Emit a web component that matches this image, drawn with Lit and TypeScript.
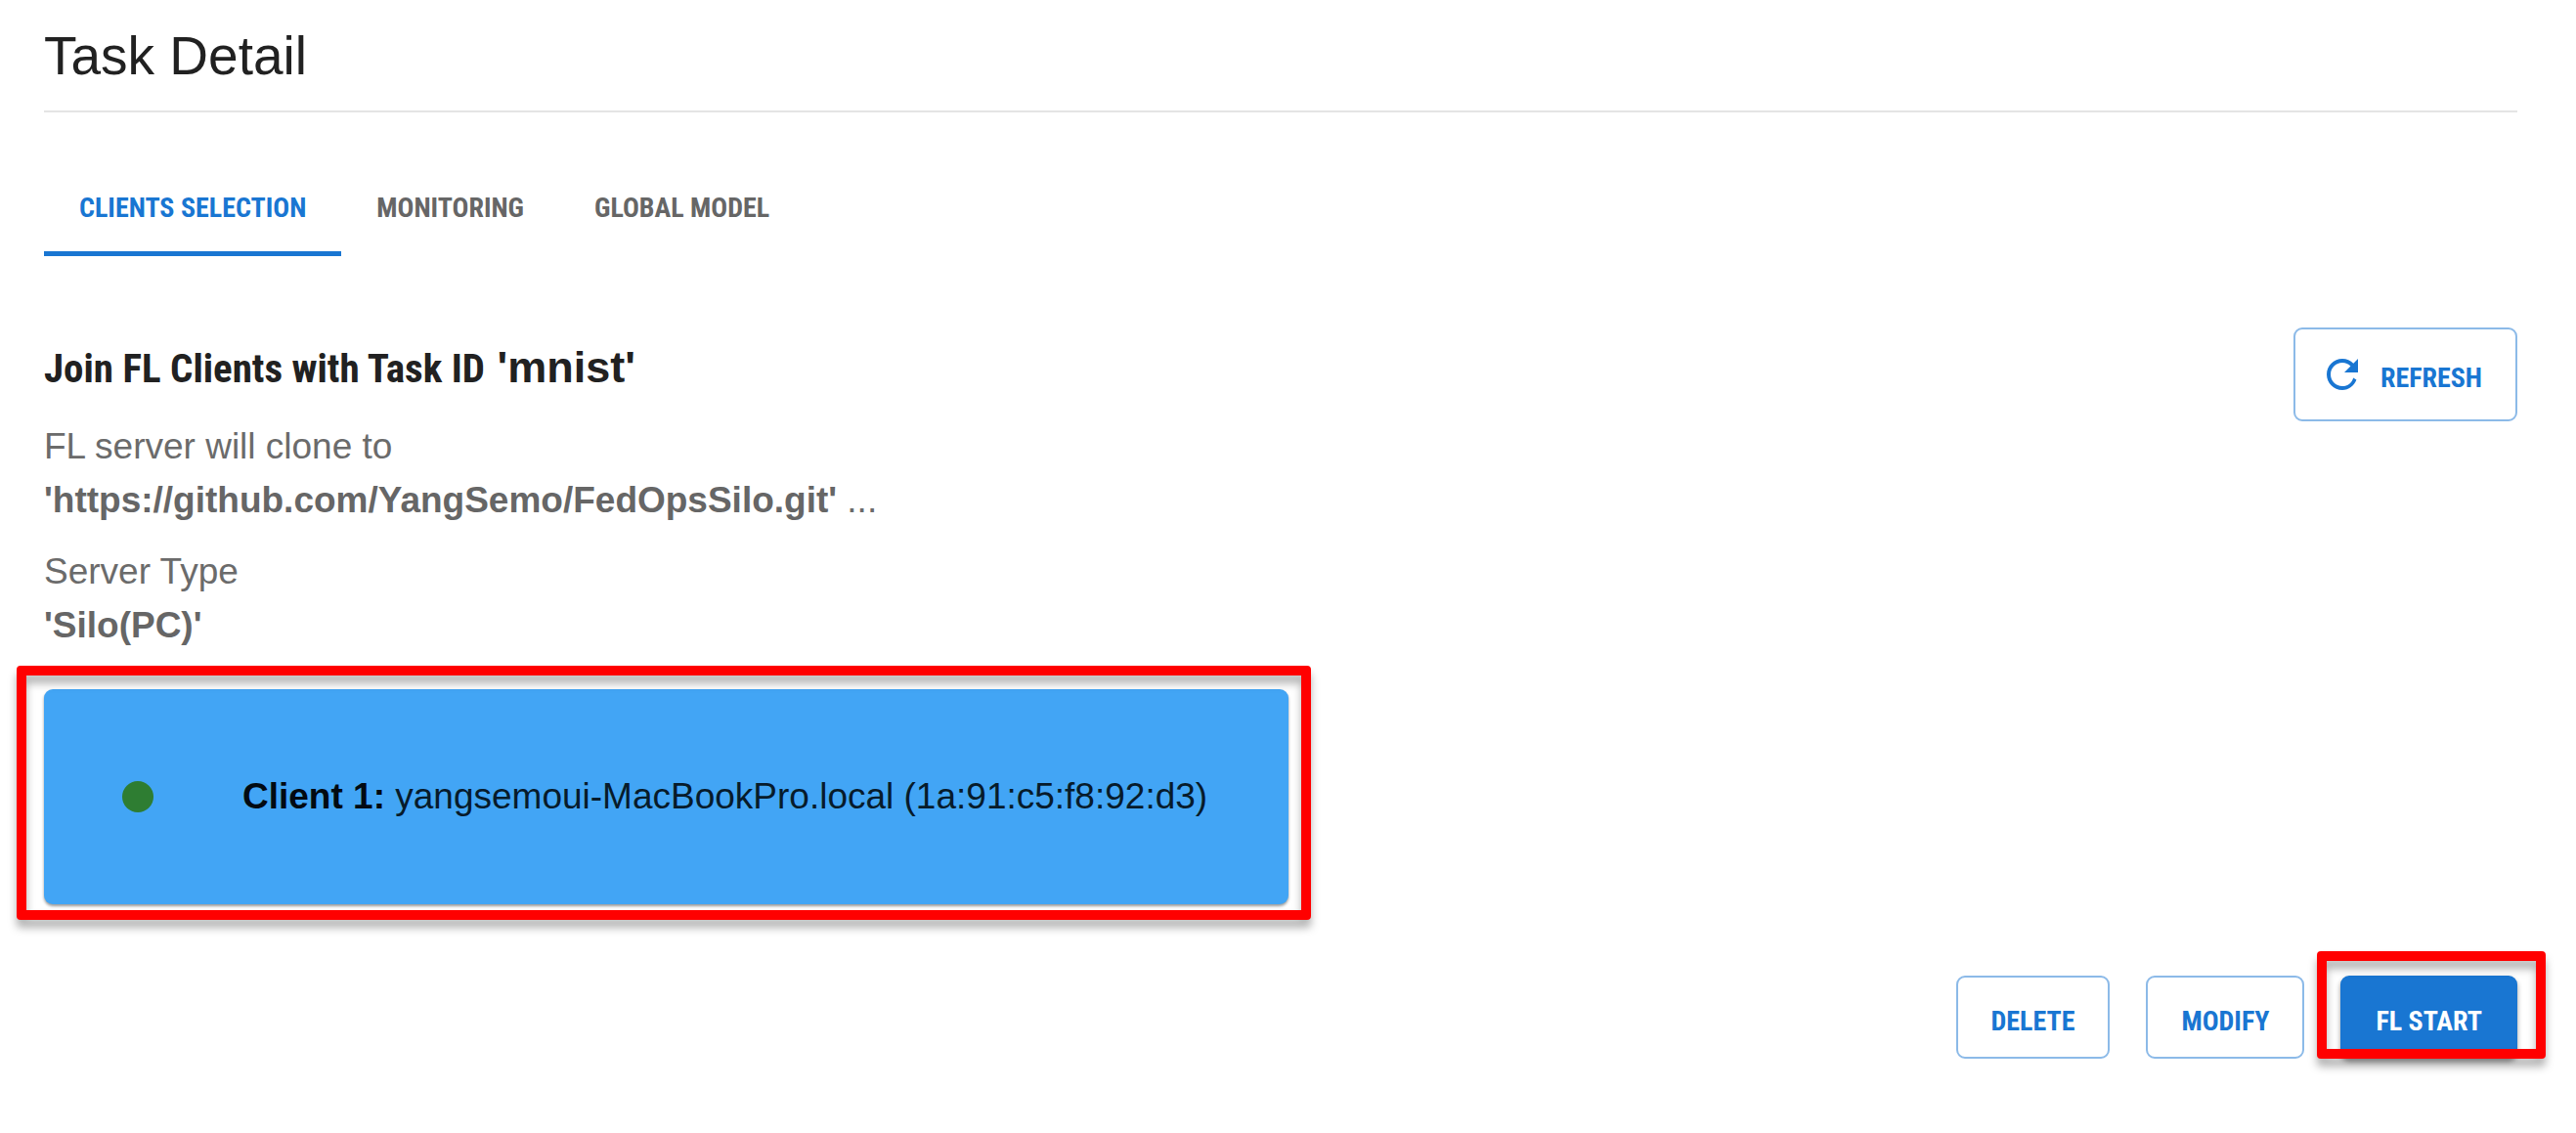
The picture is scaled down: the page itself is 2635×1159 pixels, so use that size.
import { LitElement, html, css } from "lit";
import { customElement, state } from "lit/decorators.js";

interface Client {
  label: string;
  host: string;
}

@customElement("app-root")
export class AppRoot extends LitElement {
  @state() private active = 0;

  private tabs = ["CLIENTS SELECTION", "MONITORING", "GLOBAL MODEL"];

  private clients: Client[] = [
    { label: "Client 1:", host: "yangsemoui-MacBookPro.local (1a:91:c5:f8:92:d3)" },
  ];

  static styles = css`
    :host {
      display: block;
      background: #fff;
      color: #212121;
      font-family: "Liberation Sans", Arial, sans-serif;
      font-size: 37px;
      line-height: 55px;
      --narrow: "Liberation Sans Narrow", "Roboto Condensed", "Open Sans Condensed",
        "DejaVu Sans Condensed", sans-serif;
      --primary: #1976d2;
    }
    * {
      box-sizing: border-box;
    }
    .page {
      display: flex;
      flex-direction: column;
      padding: 21px 60px 73px 45px;
    }
    .title {
      margin: 0;
      padding-bottom: 20px;
      border-bottom: 2px solid #e4e4e4;
      font-size: 55px;
      font-weight: 400;
      line-height: 72px;
    }
    .tabs {
      display: flex;
      margin-top: 37px;
    }
    .tab {
      padding: 41px 36px 24px;
      border: 0;
      border-bottom: 5px solid transparent;
      background: none;
      color: #666;
      font: 700 28px/40px var(--narrow);
      cursor: pointer;
    }
    .tab.active {
      color: var(--primary);
      border-color: var(--primary);
    }
    .panel {
      display: flex;
      justify-content: space-between;
      align-items: flex-start;
      margin-top: 73px;
    }
    .info {
      display: flex;
      flex-direction: column;
      gap: 18px;
      padding-top: 9px;
    }
    .heading {
      margin: 0 0 2px;
      font-size: 45px;
      line-height: 64px;
    }
    .heading .lead {
      font-family: var(--narrow);
      font-size: 41px;
    }
    .text {
      margin: 0;
      color: #6b6b6b;
    }
    .text b {
      color: #666;
    }
    .btn {
      display: flex;
      align-items: center;
      justify-content: center;
      padding: 25px 34px 16px;
      border: 2px solid #8cbae8;
      border-radius: 9px;
      background: #fff;
      color: var(--primary);
      font: 700 28px/40px var(--narrow);
      cursor: pointer;
    }
    .btn.refresh {
      gap: 15px;
      padding: 22px 34px 22px 24px;
    }
    .btn.refresh .label {
      padding-top: 8px;
    }
    .btn.refresh .icon {
      width: 48px;
      height: 48px;
      fill: currentColor;
    }
    .btn.start {
      border-color: var(--primary);
      background: var(--primary);
      color: #fff;
      box-shadow: 0 3px 5px rgba(0, 0, 0, 0.4);
    }
    .clients {
      display: grid;
      grid-template-columns: minmax(0, 1272fr) minmax(0, 1257fr);
      margin-top: 38px;
    }
    .marked {
      position: relative;
    }
    .frame {
      position: absolute;
      border: 10px solid #f00;
      border-radius: 4px;
      filter: drop-shadow(0 8px 4px rgba(0, 0, 0, 0.3));
      pointer-events: none;
    }
    .frame.client {
      inset: -24px -23px -16px -28px;
    }
    .frame.launch {
      inset: -25px -29px 0 -24px;
    }
    .card {
      display: flex;
      align-items: center;
      gap: 91px;
      padding: 82px 73px 83px 80px;
      border-radius: 9px;
      background: #42a5f5;
      color: #071b2b;
      box-shadow: 0 2px 3px rgba(0, 0, 0, 0.4);
      white-space: nowrap;
    }
    .card b {
      color: #020a12;
    }
    .dot {
      width: 32px;
      height: 32px;
      border-radius: 50%;
      background: #2e7d32;
    }
    .actions {
      display: flex;
      justify-content: flex-end;
      gap: 37px;
      margin-top: 73px;
    }
  `;

  render() {
    return html`
      <main class="page">
        <h1 class="title">Task Detail</h1>
        <div class="tabs" role="tablist">
          ${this.tabs.map(
            (tab, i) => html`<button
              class="tab ${i === this.active ? "active" : ""}"
              role="tab"
              aria-selected=${i === this.active}
              @click=${() => (this.active = i)}
            >${tab}</button>`
          )}
        </div>
        <section class="panel">
          <div class="info">
            <h2 class="heading"><span class="lead">Join FL Clients with Task ID</span> 'mnist'</h2>
            <p class="text">
              FL server will clone to<br /><b>'https://github.com/YangSemo/FedOpsSilo.git'</b> ...
            </p>
            <p class="text">Server Type<br /><b>'Silo(PC)'</b></p>
          </div>
          <button class="btn refresh">
            <svg class="icon" viewBox="0 0 24 24" aria-hidden="true">
              <path
                d="M17.65 6.35C16.2 4.9 14.21 4 12 4c-4.42 0-7.99 3.58-7.99 8s3.57 8 7.99 8c3.3 0 6-2.1 7.2-5.2l-1.6-1.1C16.9 16.2 14.8 18 12 18c-3.31 0-6-2.69-6-6s2.69-6 6-6c1.66 0 3.14.69 4.22 1.78L13 11h7V4l-2.35 2.35z"
              />
            </svg>
            <span class="label">REFRESH</span>
          </button>
        </section>
        <section class="clients">
          ${this.clients.map(
            (c) => html`<div class="marked">
              <div class="card">
                <span class="dot"></span>
                <span><b>${c.label}</b> ${c.host}</span>
              </div>
              <div class="frame client"></div>
            </div>`
          )}
        </section>
        <div class="actions">
          <button class="btn">DELETE</button>
          <button class="btn">MODIFY</button>
          <div class="marked">
            <button class="btn start">FL START</button>
            <div class="frame launch"></div>
          </div>
        </div>
      </main>
    `;
  }
}
